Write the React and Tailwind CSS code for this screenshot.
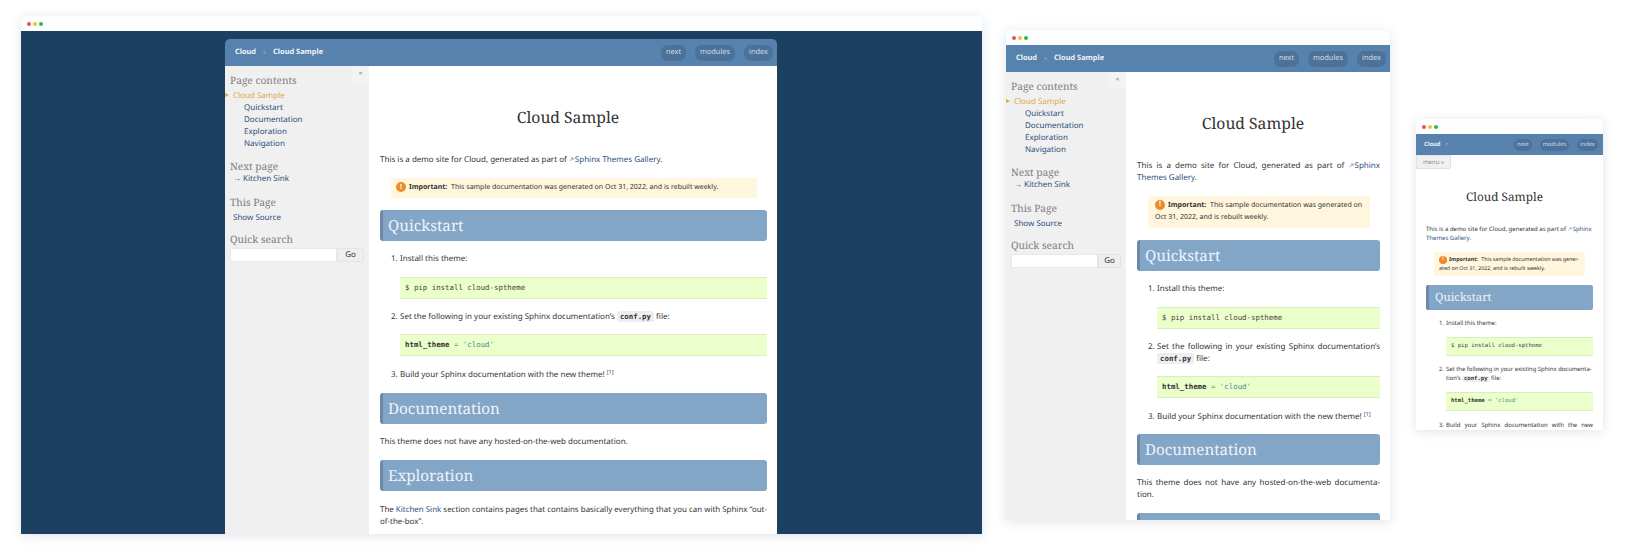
import React from 'react';

const serif = 'font-["Noto_Serif","DejaVu_Serif",serif]';
const mono = 'font-["DejaVu_Sans_Mono","Liberation_Mono",monospace]';
const linkColor = 'text-[#2c4f7c]';

// window traffic lights + title strip
function TitleBar() {
  return (
    <div className="h-[15px] shrink-0 bg-[#fcfdfe] flex items-center pl-[6px] gap-[2px] rounded-t-[5px]">
      <span className="w-[4px] h-[4px] rounded-full bg-[#e8505b]" />
      <span className="w-[4px] h-[4px] rounded-full bg-[#f5c22e]" />
      <span className="w-[4px] h-[4px] rounded-full bg-[#2fb84a]" />
    </div>
  );
}

function NavButton({ label, className }) {
  return (
    <span className={`rounded-[7px] bg-[#4d7299] text-[#cfdbe8] flex items-center justify-center ${className}`}>
      {label}
    </span>
  );
}

function ExternalIcon({ className }) {
  return (
    <svg viewBox="0 0 10 10" className={`inline-block align-baseline mr-[1px] ${className}`}>
      <path d="M1 8.5 7 2.5M4 2h4.2v4.2" fill="none" stroke="#6b87a8" strokeWidth="1.5" />
    </svg>
  );
}

function Sidebar({ className, goClass }) {
  const heading = `${serif} text-[10.2px] leading-[14px] text-[#808080]`;
  const link = `${linkColor} text-[8px] leading-[12px]`;
  return (
    <div className={`relative shrink-0 bg-[#f0f0f0] pl-[5px] pr-[5px] pt-[7px] ${className}`}>
      <span className="absolute right-0 top-0 w-[17px] h-[17px] bg-[#f3f3f3] text-[#888] text-[7px] leading-[16px] text-center">«</span>
      <h3 className={heading}>Page contents</h3>
      <div className="relative mt-[3px] pl-[3px] text-[#e0a93f] text-[8px] leading-[12px]">
        <span className="absolute left-[-5px] top-[3px] w-0 h-0 border-y-[2.5px] border-y-transparent border-l-[4px] border-l-[#e0a93f]" />
        Cloud Sample
      </div>
      <ul className={`pl-[14px] ${link}`}>
        <li>Quickstart</li>
        <li>Documentation</li>
        <li>Exploration</li>
        <li>Navigation</li>
      </ul>
      <h3 className={`${heading} mt-[9px]`}>Next page</h3>
      <div className={`pl-[3px] ${link}`}>→ Kitchen Sink</div>
      <h3 className={`${heading} mt-[10px]`}>This Page</h3>
      <div className={`pl-[3px] mt-[3px] ${link}`}>Show Source</div>
      <h3 className={`${heading} mt-[8px]`}>Quick search</h3>
      <div className="flex mt-[2px] h-[14px]">
        <span className="flex-1 bg-white border border-[#e8e8e8] rounded-l-[2px]" />
        <span className={`bg-[#efefef] border border-[#e4e4e4] rounded-r-[2px] text-[#333] text-[8px] leading-[12px] text-center ${goClass}`}>Go</span>
      </div>
    </div>
  );
}

function Section({ title, small }) {
  return (
    <h2 className={small
      ? `${serif} h-[25px] rounded-[2px] bg-[#83a5c6] border-l-[3px] border-l-[#6c8aa8] text-[#eef4fb] text-[11.4px] leading-[25px] pl-[6px]`
      : `${serif} h-[31px] rounded-[3px] bg-[#83a5c6] border-l-[3px] border-l-[#6c8aa8] text-[#eef4fb] text-[15.2px] leading-[32px] pl-[5px]`}>
      {title}
    </h2>
  );
}

function Code({ children, small }) {
  return (
    <div className={small
      ? `${mono} h-[19px] bg-[#ebffcb] border-y border-y-[#dcecc0] text-[#333] text-[5.6px] leading-[17px] pl-[5px] font-medium`
      : `${mono} h-[22px] bg-[#ebffcb] border-y border-y-[#dcecc0] text-[#333] text-[7.4px] leading-[20px] pl-[5px] font-medium`}>
      {children}
    </div>
  );
}

function Theme() {
  return (
    <>
      <span className="font-bold">html_theme</span> <span className="text-[#7aa07a]">=</span>{' '}
      <span className="text-[#4a8a9a]">'cloud'</span>
    </>
  );
}

function Important({ className, iconClass, children }) {
  return (
    <div className={`bg-[#fff6dd] rounded-[3px] ${className}`}>
      <span className={`inline-flex items-center justify-center rounded-full bg-[#ec8a2c] text-white font-bold align-middle ${iconClass}`}>!</span>
      {children}
    </div>
  );
}

const inlineCode = `${mono} bg-[#eee] rounded-[2px] px-[3px] py-[1px] text-[7.4px] font-bold`;

function Wide() {
  return (
    <div className="flex-1 min-w-0 bg-white pl-[11px] pr-[10px] text-[#333] text-[8px] leading-[12px]">
      <h1 className={`${serif} text-[15.7px] leading-[24px] text-center text-[#333] mt-[39px] pr-[11px]`}>Cloud Sample</h1>
      <p className="mt-[25px]">
        This is a demo site for Cloud, generated as part of <ExternalIcon className="w-[5px] h-[5px]" /><a className={linkColor}>Sphinx Themes Gallery</a>.
      </p>
      <Important className="mt-[12px] ml-[11px] mr-[10px] h-[20px] pl-[5px] leading-[19px] text-[7px]" iconClass="w-[10px] h-[10px] text-[7px] mr-[3px]">
        <b className="mr-[2px]">Important:</b> This sample documentation was generated on Oct 31, 2022, and is rebuilt weekly.
      </Important>
      <div className="mt-[12px]"><Section title="Quickstart" /></div>
      <ol className="mt-[12px] pl-[20px]">
        <li><span className="absolute -ml-[9px]">1.</span>Install this theme:</li>
        <li className="mt-[12px] mb-[12px]"><Code><span className="text-[#444]">$ pip install cloud-sptheme</span></Code></li>
        <li><span className="absolute -ml-[9px]">2.</span>Set the following in your existing Sphinx documentation’s <code className={inlineCode}>conf.py</code> file:</li>
        <li className="mt-[11px] mb-[13px]"><Code><Theme /></Code></li>
        <li><span className="absolute -ml-[9px]">3.</span>Build your Sphinx documentation with the new theme! <sup className={`text-[5.5px] ${linkColor}`}>[1]</sup></li>
      </ol>
      <div className="mt-[12px]"><Section title="Documentation" /></div>
      <p className="mt-[12px]">This theme does not have any hosted-on-the-web documentation.</p>
      <div className="mt-[12px]"><Section title="Exploration" /></div>
      <p className="mt-[13px] text-justify text-[7.9px]">
        The <a className={linkColor}>Kitchen Sink</a> section contains pages that contains basically everything that you can with Sphinx “out-of-the-box”.
      </p>
    </div>
  );
}

function Medium() {
  return (
    <div className="flex-1 min-w-0 bg-white pl-[11px] pr-[10px] text-[#333] text-[8px] leading-[12px] overflow-hidden">
      <h1 className={`${serif} text-[15.7px] leading-[24px] text-center text-[#333] mt-[39px] pr-[11px]`}>Cloud Sample</h1>
      <p className="mt-[25px] text-justify">
        This is a demo site for Cloud, generated as part of <ExternalIcon className="w-[5px] h-[5px]" /><a className={linkColor}>Sphinx Themes Gallery</a>.
      </p>
      <Important className="mt-[12px] ml-[11px] mr-[10px] h-[32px] px-[7px] py-[4px] leading-[12px] text-[7px]" iconClass="w-[10px] h-[10px] text-[7px] mr-[3px]">
        <b className="mr-[2px]">Important:</b> This sample documentation was generated on Oct 31, 2022, and is rebuilt weekly.
      </Important>
      <div className="mt-[12px]"><Section title="Quickstart" /></div>
      <ol className="mt-[12px] pl-[20px]">
        <li><span className="absolute -ml-[9px]">1.</span>Install this theme:</li>
        <li className="mt-[12px] mb-[12px]"><Code><span className="text-[#444]">$ pip install cloud-sptheme</span></Code></li>
        <li className="text-justify"><span className="absolute -ml-[9px]">2.</span>Set the following in your existing Sphinx documentation’s <code className={inlineCode}>conf.py</code> file:</li>
        <li className="mt-[11px] mb-[13px]"><Code><Theme /></Code></li>
        <li><span className="absolute -ml-[9px]">3.</span>Build your Sphinx documentation with the new theme! <sup className={`text-[5.5px] ${linkColor}`}>[1]</sup></li>
      </ol>
      <div className="mt-[11px]"><Section title="Documentation" /></div>
      <p className="mt-[12px] text-justify">This theme does not have any hosted-on-the-web documenta{'\u00AD'}tion.</p>
      <div className="mt-[12px]"><Section title="Exploration" /></div>
    </div>
  );
}

function Narrow() {
  return (
    <div className="relative flex-1 min-h-0 bg-white px-[10px] text-[#333] text-[6px] leading-[9px] overflow-hidden">
      <span className="absolute left-0 top-0 w-[35px] h-[14px] bg-[#f0f0f0] border border-[#e2e2e2] rounded-br-[2px] text-[#888] text-[6px] leading-[12px] text-center">menu »</span>
      <h1 className={`${serif} text-[11.8px] leading-[18px] text-center mt-[33px] pr-[10px]`}>Cloud Sample</h1>
      <p className="mt-[19px]">
        This is a demo site for Cloud, generated as part of <ExternalIcon className="w-[4px] h-[4px]" /><a className={linkColor}>Sphinx Themes Gallery</a>.
      </p>
      <Important className="mt-[9px] ml-[8px] mr-[8px] h-[24px] px-[5px] py-[3px] leading-[9px] text-[5.3px]" iconClass="w-[8px] h-[8px] text-[5px] mr-[2px]">
        <b className="mr-[2px]">Important:</b> This sample documentation was gener{'\u00AD'}ated on Oct 31, 2022, and is rebuilt weekly.
      </Important>
      <div className="mt-[9px]"><Section small title="Quickstart" /></div>
      <ol className="mt-[9px] pl-[20px]">
        <li><span className="absolute -ml-[7px]">1.</span>Install this theme:</li>
        <li className="mt-[9px] mb-[9px]"><Code small><span className="text-[#444]">$ pip install cloud-sptheme</span></Code></li>
        <li className="text-[5.9px]"><span className="absolute -ml-[7px]">2.</span>Set the following in your existing Sphinx documenta{'\u00AD'}tion’s <code className={`${mono} bg-[#eee] rounded-[2px] px-[2px] text-[5.6px] font-bold`}>conf.py</code> file:</li>
        <li className="mt-[8px] mb-[10px]"><Code small><Theme /></Code></li>
        <li className="text-justify"><span className="absolute -ml-[7px]">3.</span>Build your Sphinx documentation with the new theme! <sup className={`text-[4px] ${linkColor}`}>[1]</sup></li>
      </ol>
    </div>
  );
}

function Header({ rounded }) {
  return (
    <div className={`h-[27px] shrink-0 bg-[#5682ad] flex items-center justify-between pl-[10px] pr-[4px] text-[7.4px] ${rounded ? 'rounded-t-[5px]' : ''}`}>
      <div className="flex items-center font-bold text-[#eef3f8]">
        <span>Cloud</span>
        <span className="mx-[7px] text-[#9db8d2] font-normal text-[6px]">»</span>
        <span>Cloud Sample</span>
      </div>
      <div className="flex gap-[9px] h-[16px]">
        <NavButton label="next" className="w-[25px]" />
        <NavButton label="modules" className="w-[40px]" />
        <NavButton label="index" className="w-[29px]" />
      </div>
    </div>
  );
}

export default function App() {
  return (
    <div className='flex items-start w-[1625px] h-[550px] overflow-hidden bg-white [text-rendering:geometricPrecision] font-["Noto_Sans","Open_Sans",sans-serif]'>
      {/* desktop */}
      <div className="ml-[21px] mt-[16px] w-[961px] h-[518px] flex flex-col overflow-hidden rounded-t-[5px] shadow-[0_2px_12px_rgba(40,60,90,0.14)]">
        <TitleBar />
        <div className="flex-1 min-h-0 bg-[#1b4060] pt-[8px] pl-[204px] pr-[205px] overflow-hidden">
          <div className="h-full flex flex-col">
            <Header rounded />
            <div className="flex flex-1 min-h-0">
              <Sidebar className="w-[144px]" goClass="w-[27px]" />
              <Wide />
            </div>
          </div>
        </div>
      </div>

      {/* tablet */}
      <div className="ml-[24px] mt-[30px] w-[384px] h-[490px] flex flex-col overflow-hidden rounded-t-[5px] shadow-[0_2px_12px_rgba(40,60,90,0.14)]">
        <TitleBar />
        <Header />
        <div className="flex flex-1 min-h-0">
          <Sidebar className="w-[120px]" goClass="w-[23px]" />
          <Medium />
        </div>
      </div>

      {/* phone */}
      <div className="ml-[26px] mt-[119px] w-[187px] h-[311px] flex flex-col overflow-hidden rounded-t-[5px] shadow-[0_2px_12px_rgba(40,60,90,0.14)]">
        <TitleBar />
        <div className="h-[21px] shrink-0 bg-[#5682ad] flex items-center justify-between pl-[8px] pr-[5px] text-[5.8px]">
          <div className="flex items-center font-bold text-[#eef3f8]">
            <span>Cloud</span>
            <span className="ml-[5px] text-[#c5d5e5] font-normal text-[5px]">»</span>
          </div>
          <div className="flex gap-[8px] h-[12px]">
            <NavButton label="next" className="w-[18px]" />
            <NavButton label="modules" className="w-[29px]" />
            <NavButton label="index" className="w-[21px]" />
          </div>
        </div>
        <Narrow />
      </div>
    </div>
  );
}
